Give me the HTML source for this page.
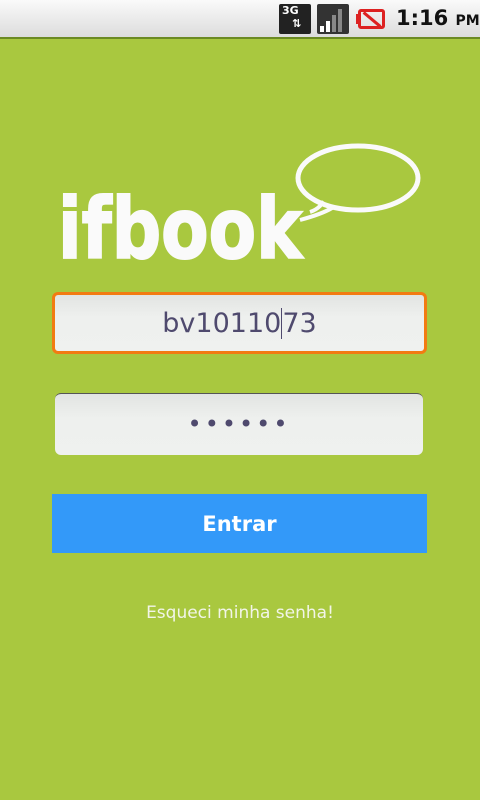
<!DOCTYPE html>
<html><head><meta charset="utf-8"><style>
body{margin:0;width:480px;height:800px;background:#a9c83f;position:relative;overflow:hidden;font-family:"DejaVu Sans","Liberation Sans",sans-serif}
.sb{position:absolute;left:0;top:0;width:480px;height:37px;background:linear-gradient(#fafafa,#dcdcdc);border-bottom:2px solid #6b8a23}
.f{position:absolute;border-radius:6px;background:linear-gradient(#e2e4e2,#eef0ee 40%,#eff1ef);box-sizing:border-box;text-align:center;color:#4f4a6e}
</style></head><body>
<div class="sb">
 <div style="position:absolute;left:279px;top:4px;width:32px;height:30px;background:#222;border-radius:2px;color:#fff;font:bold 11px 'DejaVu Sans';text-align:left;padding-left:3px;box-sizing:border-box">3G<br><span style="margin-left:10px">⇅</span></div>
 <div style="position:absolute;left:317px;top:4px;width:32px;height:30px;background:#333;border-radius:2px"></div>
 <div style="position:absolute;left:320px;top:26px;width:4px;height:6px;background:#fff"></div>
 <div style="position:absolute;left:326px;top:21px;width:4px;height:11px;background:#fff"></div>
 <div style="position:absolute;left:332px;top:15px;width:4px;height:17px;background:#888"></div>
 <div style="position:absolute;left:338px;top:9px;width:4px;height:23px;background:#888"></div>
 <div style="position:absolute;left:358px;top:9px;width:27px;height:20px;border:3px solid #d22;border-radius:3px;box-sizing:border-box"></div>
 <div style="position:absolute;left:356px;top:14px;width:4px;height:10px;background:#d22"></div>
 <div style="position:absolute;left:361px;top:18px;width:22px;height:3px;background:#d22;transform:rotate(40deg)"></div>
 <div style="position:absolute;left:396px;top:6px;font:bold 21px 'DejaVu Sans';color:#111">1:16 <span style="font-size:14px">PM</span></div>
</div>
<svg style="position:absolute;left:0;top:0" width="480" height="300">
 <ellipse cx="358" cy="178" rx="60" ry="32" fill="none" stroke="#fafafa" stroke-width="5"/>
 <path d="M310 212 Q316 210 320 206 Q325 200 318 204 M300 220 Q322 214 332 208" fill="none" stroke="#fafafa" stroke-width="4"/>
 <text x="58" y="258" font-family="DejaVu Sans" font-weight="bold" font-size="84" fill="#fafafa" stroke="#fafafa" stroke-width="2" textLength="244" lengthAdjust="spacingAndGlyphs">ifbook</text>
</svg>
<div class="f" style="left:52px;top:292px;width:375px;height:62px;border:3px solid #f27b12;font-size:27px;line-height:58px">bv1011<span style="border-right:1px solid #4f4a6e">0</span>73</div>
<div class="f" style="left:55px;top:393px;width:368px;height:62px;border-top:1px solid #555;font-size:24px;line-height:60px;letter-spacing:3px">••••••</div>
<div style="position:absolute;left:52px;top:494px;width:375px;height:59px;background:#3399f9;color:#fff;font-weight:bold;font-size:21px;text-align:center;line-height:60px">Entrar</div>
<div style="position:absolute;left:0;top:603px;width:480px;text-align:center;color:#f2f5e8;font-size:17px">Esqueci minha senha!</div>
</body></html>
